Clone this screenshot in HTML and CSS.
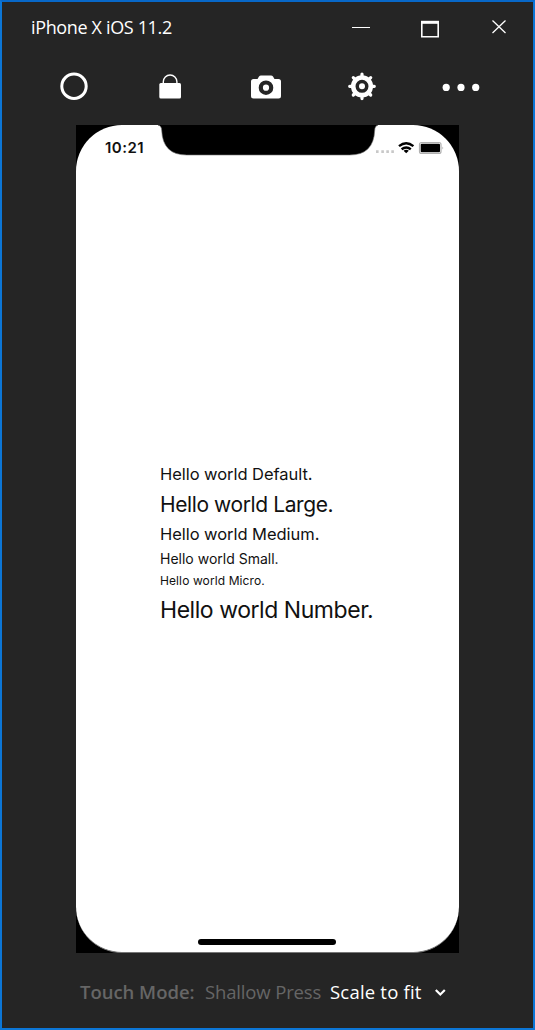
FILE: index.html
```
<!DOCTYPE html>
<html lang="en">
<head>
<meta charset="utf-8">
<title>iPhone X iOS 11.2</title>
<link rel="stylesheet" href="styles.css">
</head>
<body>
<div class="window">
  <header class="titlebar">
    <h1 class="title">iPhone X iOS 11.2</h1>
    <svg class="controls" width="160" height="24" viewBox="350 16 160 24" fill="none" stroke="#fff">
      <path d="M352 27.500h18"/>
      <path stroke-width="1.600" d="M421.800 21v15.700h16.400V21"/>
      <path d="M421 22.300h18" stroke-width="3"/>
      <path d="M492.500 20.500l13 12.500M505.500 20.500l-13 12.500" stroke-width="1.300"/>
    </svg>
  </header>
  <nav class="toolbar">
    <svg width="96" height="36" viewBox="26 68 96 36"><circle cx="74" cy="86.300" r="12.200" fill="none" stroke="#fff" stroke-width="3"/></svg>
    <svg width="96" height="36" viewBox="122 68 96 36"><rect x="159.300" y="83" width="21.700" height="15.600" rx="1.500" fill="#fff"/><path d="M163.300 84v-2.200a6.800 6.800 0 0 1 13.600 0V84" fill="none" stroke="#fff" stroke-width="1.400"/></svg>
    <svg width="96" height="36" viewBox="218 68 96 36"><path fill="#fff" d="M253.500 79h4l1.500-2.500q.7-1 2-1h10q1.300 0 2 1l1.500 2.500h4q2.500 0 2.500 2.500v14.500q0 2.500-2.500 2.500h-25q-2.500 0-2.500-2.500V81.500q0-2.500 2.500-2.500z"/><circle cx="266" cy="87.700" r="5.200" fill="none" stroke="#252525" stroke-width="4.200"/></svg>
    <svg width="96" height="36" viewBox="314 68 96 36"><g transform="translate(362 86.300)"><circle r="8.800" fill="none" stroke="#fff" stroke-width="4.600"/><circle r="3" fill="#fff"/><path stroke="#fff" stroke-width="3.200" stroke-linecap="round" d="M0-10v-2.300M0 10v2.300M-10 0h-2.300M10 0h2.300M-7.200-7.200l-1.500-1.500M7.200 7.200l1.500 1.500M7.200-7.200l1.500-1.500M-7.200 7.200l-1.500 1.500"/></g></svg>
    <svg width="96" height="36" viewBox="410 68 96 36" fill="#fff"><circle cx="446.200" cy="87.400" r="3.600"/><circle cx="461" cy="87.400" r="3.600"/><circle cx="475.700" cy="87.400" r="3.600"/></svg>
  </nav>
  <main class="device">
    <div class="screen">
      <div class="status">
        <span class="time">10:21</span>
        <svg class="notch" width="220" height="31" viewBox="158 125 220 31"><path stroke="#777" stroke-width=".6" d="M158 124.500v.8q3.500.2 3.700 5.200 1 24.500 25 24.500h163q24 0 25-24.500 .2-5 3.600-5.200v-.8z"/></svg>
        <svg width="70" height="18" viewBox="374 139 70 18">
          <path fill="#c8c8c8" d="M376 150.300h2.600v2.600H376zM381.300 150.300h2.600v2.600h-2.600zM386.300 150.300h2.600v2.600h-2.600zM391.300 150.300h2.600v2.600h-2.600z"/>
          <g fill="none" stroke="#000" stroke-width="2.400"><path d="M399 146.200q7.200-6 14.400 0M401.600 149.200q4.600-3.600 9.200 0"/></g><path d="M406.200 153.300l-2.600-2.500q2.600-1.900 5.200 0z"/>
          <rect x="419.500" y="142.500" width="21.500" height="11" rx="2" fill="none" stroke="#b0b0b0" stroke-width="1.200"/><rect x="420.700" y="143.700" width="19.300" height="8.600" rx="1"/><path d="M442.500 146.500q1.500 1.500 0 3z" fill="#999"/>
        </svg>
      </div>
      <div class="labels">
        <p class="default">Hello world Default.</p>
        <p class="large">Hello world Large.</p>
        <p class="medium">Hello world Medium.</p>
        <p class="small">Hello world Small.</p>
        <p class="micro">Hello world Micro.</p>
        <p class="number">Hello world Number.</p>
      </div>
      <div class="home"></div>
    </div>
  </main>
  <footer class="footer">
    <span class="mode">Touch Mode:</span><span class="press">Shallow Press</span><span class="scale">Scale to fit</span>
    <svg width="12" height="8" viewBox="434 988 12 8"><path d="M435.800 989l4.500 4.500 4.500-4.500" fill="none" stroke="#fff" stroke-width="2.200"/></svg>
  </footer>
</div>
</body>
</html>
```
FILE: styles.css
```
* { box-sizing: border-box; margin: 0; padding: 0; }
body { width: 535px; height: 1030px; overflow: hidden; }
svg { display: block; flex: none; }
.window {
  width: 535px; height: 1030px;
  display: flex; flex-direction: column;
  background: #252525;
  border: 2px solid #0c76d6;
  border-top-color: #0868c8;
}
.titlebar { height: 66px; padding: 14px 23px 0 29px; display: flex; justify-content: space-between; }
.title { font: 400 18px/22px "Open Sans", sans-serif; letter-spacing: -0.35px; color: #fff; white-space: nowrap; }
.toolbar { height: 57px; padding-left: 24px; display: flex; }
.device { width: 383px; height: 828px; margin-left: 74px; background: #000; }
.screen {
  height: 828px; background: #fff; border-radius: 46px; border: 1px solid #777; border-width: 0 0 1px;
  display: flex; flex-direction: column;
}
.status { height: 339px; display: flex; align-items: flex-start; }
.status svg:last-child { margin: 14px 0 0 -4px; }
.time { width: 82px; padding: 13px 0 0 29px; font: 600 15px/20px Inter, sans-serif; letter-spacing: 0.5px; color: #111; }
.labels { padding-left: 84px; font-family: Inter, sans-serif; color: #111; flex: 1; }
.labels p { white-space: nowrap; width: max-content; }
.labels .default { font-size: 16.500px; line-height: 20px; letter-spacing: -0.050px; }
.labels .large { font-size: 21px; line-height: 41px; letter-spacing: -0.4px; }
.labels .medium { font-size: 16.500px; line-height: 19px; letter-spacing: -0.050px; }
.labels .small { font-size: 14px; line-height: 30px; }
.labels .micro { font-size: 12px; line-height: 14px; letter-spacing: 0.100px; }
.labels .number { font-size: 23px; line-height: 45px; letter-spacing: -0.450px; }
.home { width: 138px; height: 6px; border-radius: 3px; background: #000; margin: 0 0 7px 122px; }
.footer { flex: 1; padding: 27px 0 0 78px; display: flex; font: 400 18.500px/24px "Open Sans", sans-serif; color: #666; white-space: nowrap; }
.mode { width: 125px; font-weight: 600; letter-spacing: -0.02px; }
.press { width: 125px; letter-spacing: -0.150px; }
.scale { width: 102px; color: #fff; letter-spacing: 0.2px; }
.footer svg { margin: 9px 0 0 2px; }
```
